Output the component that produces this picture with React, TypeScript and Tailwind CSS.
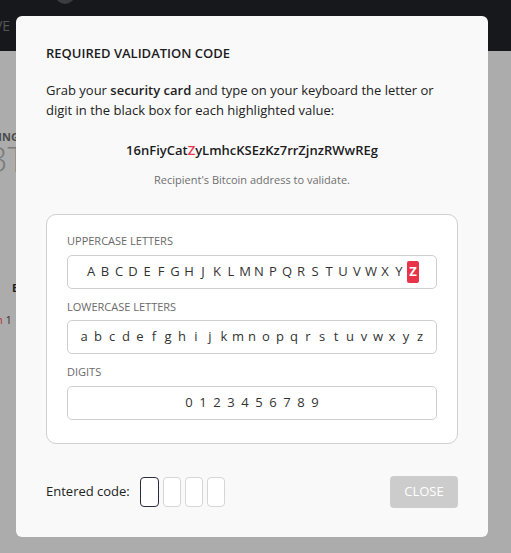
const UPPER = "ABCDEFGHJKLMNPQRSTUVWXYZ".split("");
const LOWER = "abcdefghijkmnopqrstuvwxyz".split("");
const DIGITS = "0123456789".split("");

function CharRow({ chars, highlight }: { chars: string[]; highlight?: string }) {
  return (
    <div className="flex h-[34px] items-center justify-center rounded-[5px] border border-[#cfcfcf] bg-white">
      {chars.map((c) => (
        <span key={c} className="flex w-[14px] justify-center">
          {c === highlight ? (
            <span className="flex h-[22px] w-[12px] items-center justify-center rounded-[2px] bg-[#e8334a] font-bold text-white">
              {c}
            </span>
          ) : (
            c
          )}
        </span>
      ))}
    </div>
  );
}

export default function App() {
  return (
    <div className="relative h-[553px] w-[511px] overflow-hidden bg-[#acacac] font-['Open_Sans',sans-serif]">
      {/* page behind the overlay */}
      <header className="relative h-[51px] bg-[#17181c]">
        <div className="absolute left-[55px] top-[-16px] h-[20px] w-[20px] rounded-full bg-[#3b3c40]" />
        <span className="absolute left-[-6px] top-[15px] text-[14px] text-[#55565a]">VE</span>
      </header>
      <div className="pt-[78px] text-[#333]">
        <div className="ml-[-8px] text-[11px] font-bold text-[#4a4a4a]">TING</div>
        <div className="ml-[-12px] mt-[-4px] text-[34px] font-light leading-none text-[#7a7a7a]">3T</div>
        <div className="ml-[12px] mt-[104px] text-[11px] font-bold text-[#222]">E</div>
        <div className="ml-[-4px] mt-[16px] text-[11px]">
          <span className="text-[#b3302f]">n</span> <span className="text-[#333]">1</span>
        </div>
      </div>

      {/* modal */}
      <div className="absolute left-4 top-4 flex h-[521px] w-[472px] flex-col rounded-md bg-[#f9f9f9] px-[30px] pt-[27px] text-[#222]">
        <h2 className="text-[13px] font-semibold leading-5 text-[#1d1d1f]">REQUIRED VALIDATION CODE</h2>
        <p className="mt-[17px] text-[13px] leading-5 text-[#222]">
          Grab your <span className="font-semibold">security card</span> and type on your keyboard the letter or digit in the black box for each highlighted value:
        </p>
        <div className="mt-[21px] text-center text-[13px] font-semibold text-[#1d1d1f]">
          16nFiyCat<span className="text-[#e8334a]">Z</span>yLmhcKSEzKz7rrZjnzRWwREg
        </div>
        <div className="mt-[11px] text-center text-[11px] text-[#6f6f6f]">Recipient's Bitcoin address to validate.</div>

        <div className="mt-[26px] flex h-[230px] flex-col rounded-[10px] border border-[#d0d0d0] bg-white px-5 pt-[18px] text-[13px] text-[#333]">
          <div className="text-[11px] text-[#6a6a6a]">UPPERCASE LETTERS</div>
          <div className="mt-[5px]">
            <CharRow chars={UPPER} highlight="Z" />
          </div>
          <div className="mt-[10px] text-[11px] text-[#6a6a6a]">LOWERCASE LETTERS</div>
          <div className="mt-[5px]">
            <CharRow chars={LOWER} />
          </div>
          <div className="mt-[10px] text-[11px] text-[#6a6a6a]">DIGITS</div>
          <div className="mt-[5px]">
            <CharRow chars={DIGITS} />
          </div>
        </div>

        <div className="mt-[32px] flex items-center justify-between">
          <div className="flex items-center">
            <span className="text-[13px] text-[#222]">Entered code:</span>
            <div className="ml-[10px] flex gap-[4px]">
              <div className="h-[30px] w-[19px] rounded-[4px] border border-[#2a2d3a] bg-white" />
              <div className="h-[30px] w-[18px] rounded-[4px] border border-[#d5d5d5] bg-white" />
              <div className="h-[30px] w-[18px] rounded-[4px] border border-[#d5d5d5] bg-white" />
              <div className="h-[30px] w-[18px] rounded-[4px] border border-[#d5d5d5] bg-white" />
            </div>
          </div>
          <button type="button" className="h-[32px] w-[68px] rounded-[4px] bg-[#cccccc] text-[13px] text-white">
            CLOSE
          </button>
        </div>
      </div>
    </div>
  );
}
